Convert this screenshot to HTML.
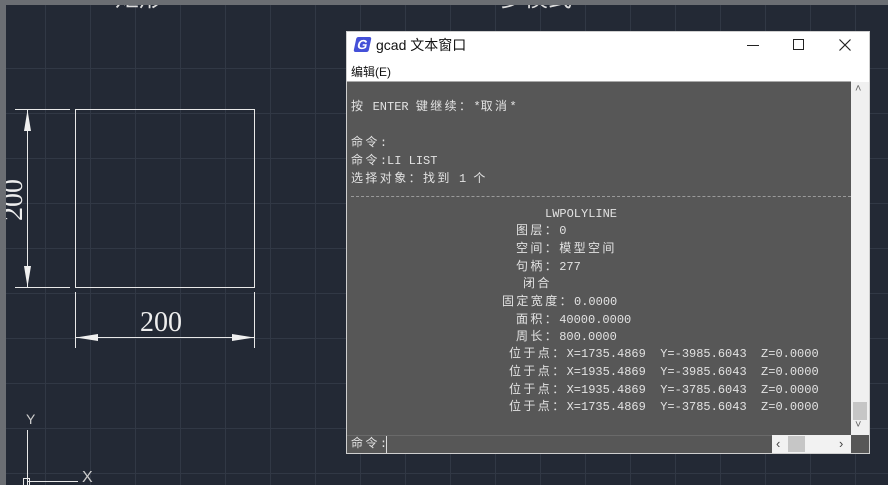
<!DOCTYPE html>
<html><head><meta charset="utf-8"><style>
*{margin:0;padding:0;box-sizing:border-box}
body{width:888px;height:485px;overflow:hidden;position:relative;background:#232935;font-family:"Liberation Sans","Noto Sans CJK SC",sans-serif}
.grid{position:absolute;inset:0;background:
repeating-linear-gradient(90deg,transparent 0 44px,#313845 44px 45px),
repeating-linear-gradient(0deg,transparent 0 44px,#313845 44px 45px);background-position:1px 32px,0 33px}
.ab{position:absolute}
.t{position:absolute;font:12px/17px "Liberation Mono","Noto Sans CJK SC",monospace;color:#e2e2e2;white-space:pre}
.c{letter-spacing:2.4px}
</style></head><body>
<div class="grid"></div>
<div class="ab" style="left:115px;top:-22px;color:#ddd;font:24px 'Noto Sans CJK SC',sans-serif">矩形</div>
<div class="ab" style="left:500px;top:-22px;color:#ddd;font:24px 'Noto Sans CJK SC',sans-serif">多模式</div>
<div class="ab" style="left:0;top:0;width:888px;height:5px;background:#6b6e73"></div>
<svg class="ab" style="left:0;top:0" width="346" height="485">
<g stroke="#e8e8e8" stroke-width="1" fill="none">
<rect x="75.5" y="109.5" width="179" height="178"/>
<line x1="15" y1="109.5" x2="70" y2="109.5"/><line x1="15" y1="287.5" x2="70" y2="287.5"/>
<line x1="27.5" y1="110" x2="27.5" y2="287"/>
<line x1="75.5" y1="292" x2="75.5" y2="348"/><line x1="254.5" y1="292" x2="254.5" y2="348"/>
<line x1="76" y1="337.5" x2="254" y2="337.5"/>
<line x1="27.5" y1="430" x2="27.5" y2="485"/><line x1="27" y1="481.5" x2="78" y2="481.5"/>
<rect x="23.5" y="478.5" width="6" height="7"/>
</g>
<g fill="#f0f0f0">
<polygon points="27.5,110 24,131 31,131"/><polygon points="27.5,287 24,266 31,266"/>
<polygon points="76,337.5 98,334 98,341"/><polygon points="254,337.5 232,334 232,341"/>
</g>
<text x="140" y="331" fill="#eee" font-family="Liberation Serif" font-size="28">200</text>
<text transform="translate(22,221) rotate(-90)" fill="#eee" font-family="Liberation Serif" font-size="28">200</text>
<text x="26" y="424" fill="#ccc" font-family="Liberation Sans" font-size="14">Y</text>
<text x="82" y="482" fill="#ccc" font-family="Liberation Sans" font-size="16">X</text>
</svg>
<div class="ab" style="left:0;top:0;width:6px;height:485px;background:#6b6e73"></div>
<div class="ab" style="left:346px;top:31px;width:524px;height:423px;background:#fff;border:1px solid #cfcfcf"></div>
<div class="ab" style="left:355px;top:37px;width:15px;height:15px;background:#4450d8;border-radius:2px;transform:skewX(-12deg);color:#fff;font:bold 13px/15px 'Liberation Sans';text-align:center">G</div>
<div class="ab" style="left:376px;top:35px;font-size:14px;color:#111">gcad 文本窗口</div>
<div class="ab" style="left:747px;top:45px;width:12px;height:1px;background:#222"></div>
<div class="ab" style="left:793px;top:39px;width:11px;height:11px;border:1px solid #222"></div>
<svg class="ab" style="left:839px;top:39px" width="12" height="12"><path d="M0.5 0.5L11.5 11.5M11.5 0.5L0.5 11.5" stroke="#222" stroke-width="1.2"/></svg>
<div class="ab" style="left:351px;top:63px;font-size:12px;color:#111">编辑(E)</div>
<div class="ab" style="left:347px;top:81px;width:504px;height:355px;background:#575757;border-top:1px solid #aaa"></div>
<div class="ab" style="left:851px;top:82px;width:18px;height:353px;background:#f0f0f0"></div>
<div class="ab" style="left:853px;top:402px;width:14px;height:18px;background:#c6c6c6"></div>
<div class="ab" style="left:855px;top:83px;color:#666;font-size:11px">&#x2c4;</div>
<div class="ab" style="left:855px;top:419px;color:#666;font-size:11px">&#x2c5;</div>
<div class="ab" style="left:347px;top:435px;width:504px;height:18px;background:#575757;border-top:1px solid #6a6a6a"></div>
<div class="ab" style="left:386px;top:436px;width:1px;height:17px;background:#ddd"></div>
<div class="ab" style="left:772px;top:435px;width:79px;height:18px;background:#f2f2f2"></div>
<div class="ab" style="left:788px;top:436px;width:17px;height:16px;background:#c6c6c6"></div>
<div class="ab" style="left:776px;top:436px;color:#444;font-size:13px">&lsaquo;</div>
<div class="ab" style="left:839px;top:436px;color:#444;font-size:13px">&rsaquo;</div>
<div class="ab" style="left:851px;top:435px;width:18px;height:18px;background:#575757"></div>
<div class="ab" style="left:351px;top:196px;width:500px;border-top:1px dashed #9a9a9a"></div>
<div class="t" style="left:351px;top:99px"><span class="c">按</span> ENTER <span class="c">键继续：</span>*<span class="c">取消</span>*</div>
<div class="t" style="left:351px;top:135px"><span class="c">命令</span>:</div>
<div class="t" style="left:351px;top:153px"><span class="c">命令</span>:LI LIST</div>
<div class="t" style="left:351px;top:171px"><span class="c">选择对象：找到</span> 1 <span class="c">个</span></div>
<div class="t" style="left:545px;top:206px">LWPOLYLINE</div>
<div class="t" style="left:516px;top:223px"><span class="c">图层：</span>0</div>
<div class="t" style="left:516px;top:241px"><span class="c">空间：模型空间</span></div>
<div class="t" style="left:516px;top:259px"><span class="c">句柄：</span>277</div>
<div class="t" style="left:523px;top:276px"><span class="c">闭合</span></div>
<div class="t" style="left:502px;top:294px"><span class="c">固定宽度：</span>0.0000</div>
<div class="t" style="left:516px;top:312px"><span class="c">面积：</span>40000.0000</div>
<div class="t" style="left:516px;top:329px"><span class="c">周长：</span>800.0000</div>
<div class="t" style="left:509px;top:346px"><span class="c">位于点：</span>X=1735.4869  Y=-3985.6043  Z=0.0000</div>
<div class="t" style="left:509px;top:364px"><span class="c">位于点：</span>X=1935.4869  Y=-3985.6043  Z=0.0000</div>
<div class="t" style="left:509px;top:382px"><span class="c">位于点：</span>X=1935.4869  Y=-3785.6043  Z=0.0000</div>
<div class="t" style="left:509px;top:399px"><span class="c">位于点：</span>X=1735.4869  Y=-3785.6043  Z=0.0000</div>
<div class="t" style="left:351px;top:436px"><span class="c">命令</span>:</div>
</body></html>
